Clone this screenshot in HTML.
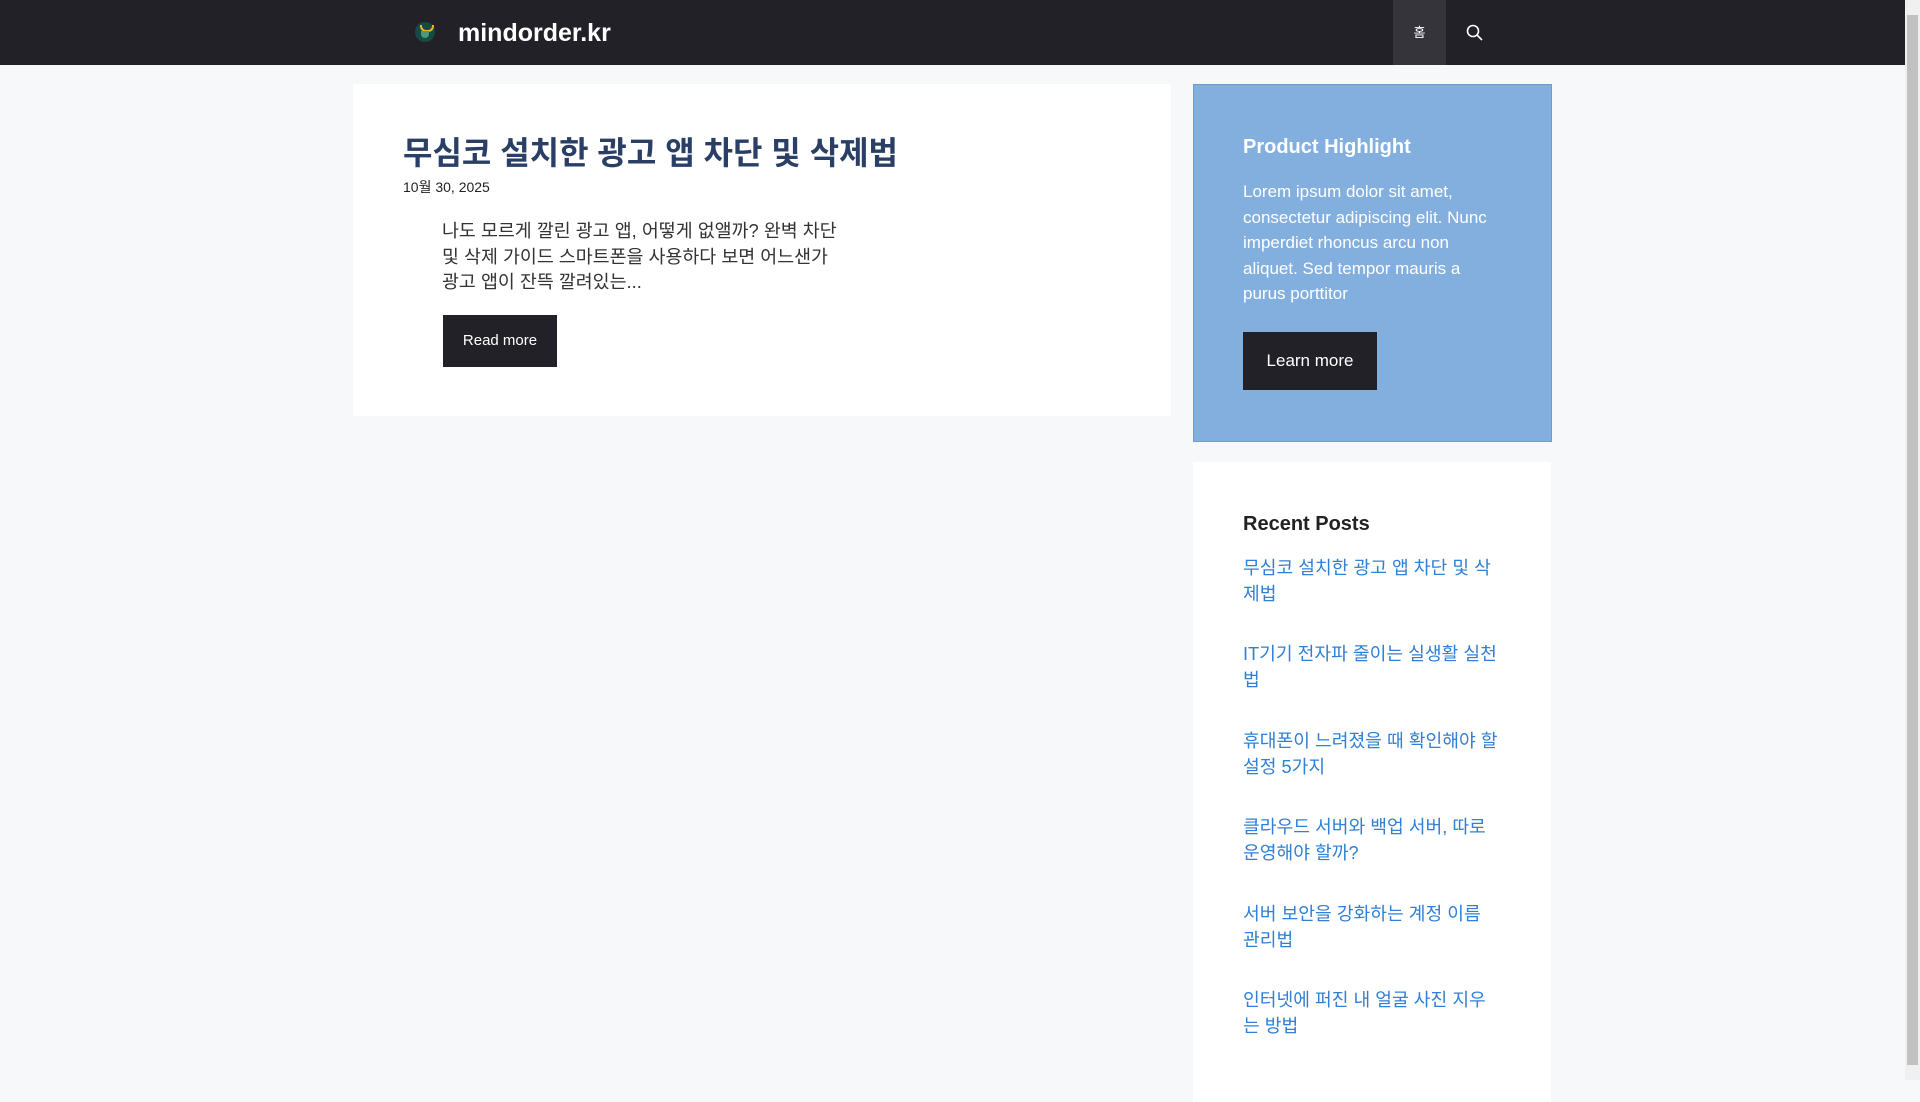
<!DOCTYPE html>
<html><head><meta charset="utf-8"><style>
*{margin:0;padding:0;box-sizing:border-box}
body{width:1920px;height:1080px;overflow:hidden;background:#f7f8f9;font-family:"Liberation Sans","Noto Sans CJK KR",sans-serif;position:relative}
.hdr{position:absolute;left:0;top:0;width:1905px;height:65px;background:#222127}
.logo{position:absolute;left:415px;top:22px;width:20px;height:20px;border-radius:50%;background:#174a44}
.logo:before{content:"";position:absolute;left:5px;top:3px;width:10px;height:5px;border:2px solid #e8b52a;border-top:none;border-radius:0 0 6px 6px}
.logo:after{content:"";position:absolute;left:6px;top:9px;width:8px;height:7px;background:#4d9a7b;border-radius:0 0 4px 4px}
.site{position:absolute;left:458px;top:19px;color:#fff;font-weight:bold;font-size:25px}
.nav{position:absolute;left:1393px;top:0;width:53px;height:65px;background:#35343b;color:#fff;font-size:13px;text-align:center;line-height:65px}
.srch{position:absolute;left:1466px;top:24px}
.sb{position:absolute;left:1905px;top:0;width:15px;height:1080px;background:#f0f0f0}
.sb div{position:absolute;left:2px;top:15px;width:11px;height:1050px;background:#c1c1c1}
.card{position:absolute;left:353px;top:84px;width:818px;height:332px;background:#fff}
h1{position:absolute;left:403px;top:128px;font-size:32px;color:#2a3f66;font-weight:bold;white-space:nowrap}
.date{position:absolute;left:403px;top:177px;font-size:14px;color:#222}
.ex{position:absolute;left:442px;top:218px;width:400px;font-size:18.4px;line-height:25.5px;color:#333}
.btn{position:absolute;background:#222127;color:#fff;text-align:center}
.w1{position:absolute;left:1193px;top:84px;width:359px;height:358px;background:#83afdf;border:1px solid #6f9ccd}
.w1 h2{position:absolute;left:49px;top:51px;font-size:20px;color:#fff}
.w1 p{position:absolute;left:49px;top:94px;width:248px;font-size:17px;line-height:25.5px;color:#fff}
.w2{position:absolute;left:1193px;top:462px;width:358px;height:640px;background:#fff}
.w2 h2{position:absolute;left:50px;top:51px;font-size:20px;color:#222}
.w2 a{position:absolute;left:50px;white-space:nowrap;font-size:18.2px;line-height:25.5px;color:#2f80d6;text-decoration:none}
</style></head><body>
<div class="hdr"><div class="logo"></div><div class="site">mindorder.kr</div>
<div class="nav">홈</div>
<svg class="srch" width="18" height="18" viewBox="0 0 18 18"><circle cx="7" cy="7" r="5.5" fill="none" stroke="#fff" stroke-width="1.6"/><line x1="11" y1="11" x2="16" y2="16" stroke="#fff" stroke-width="1.6"/></svg>
</div>
<div class="sb"><div></div></div>
<div class="card"></div>
<h1>무심코 설치한 광고 앱 차단 및 삭제법</h1>
<div class="date">10월 30, 2025</div>
<div class="ex">나도 모르게 깔린 광고 앱, 어떻게 없앨까? 완벽 차단 및 삭제 가이드 스마트폰을 사용하다 보면 어느샌가 광고 앱이 잔뜩 깔려있는...</div>
<div class="btn" style="left:443px;top:315px;width:114px;height:52px;line-height:52px;font-size:15px">Read more</div>
<div class="w1"><h2>Product Highlight</h2><p>Lorem ipsum dolor sit amet, consectetur adipiscing elit. Nunc imperdiet rhoncus arcu non aliquet. Sed tempor mauris a purus porttitor</p>
<div class="btn" style="left:49px;top:247px;width:134px;height:58px;line-height:58px;font-size:17px">Learn more</div></div>
<div class="w2"><h2>Recent Posts</h2>
<a style="top:94px">무심코 설치한 광고 앱 차단 및 삭<br>제법</a>
<a style="top:180px">IT기기 전자파 줄이는 실생활 실천<br>법</a>
<a style="top:267px">휴대폰이 느려졌을 때 확인해야 할<br>설정 5가지</a>
<a style="top:353px">클라우드 서버와 백업 서버, 따로<br>운영해야 할까?</a>
<a style="top:440px">서버 보안을 강화하는 계정 이름<br>관리법</a>
<a style="top:526px">인터넷에 퍼진 내 얼굴 사진 지우<br>는 방법</a>
</div>
</body></html>
